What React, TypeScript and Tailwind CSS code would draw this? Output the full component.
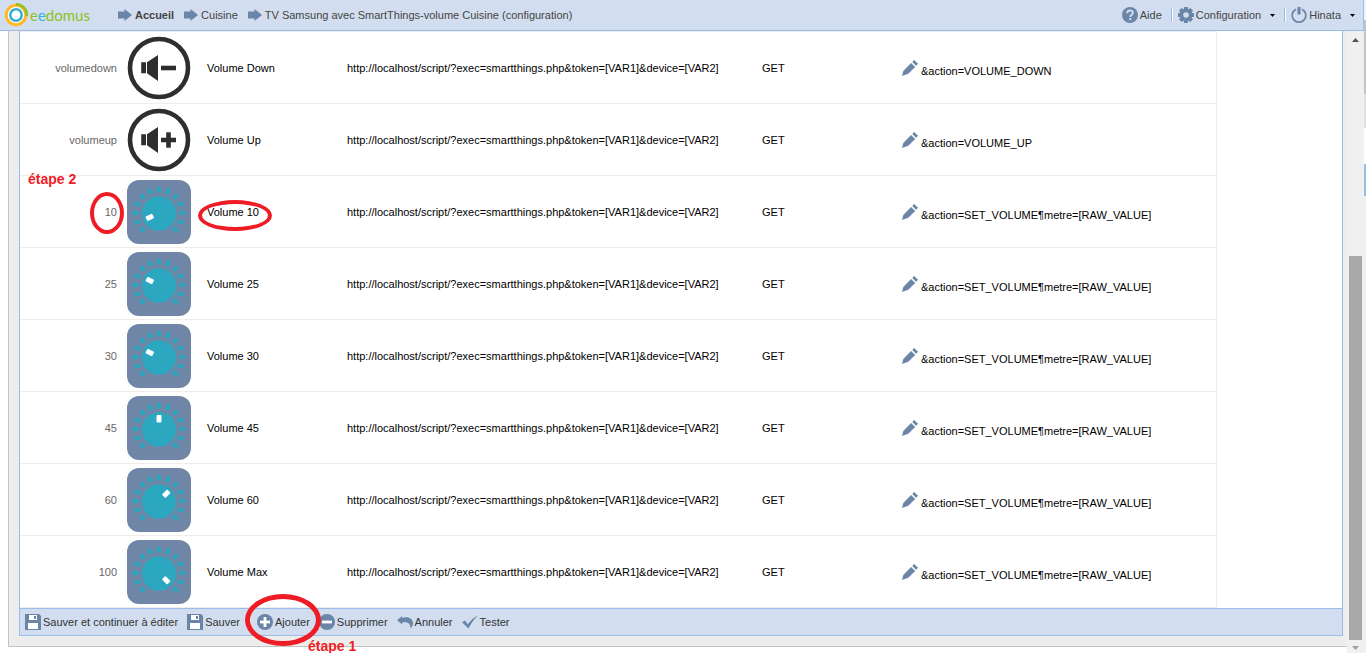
import React from 'react';

const SCRIPT_URL = 'http://localhost/script/?exec=smartthings.php&token=[VAR1]&device=[VAR2]';

type Row = {
  value: string;
  name: string;
  param: string;
  icon: 'down' | 'up' | 'knob';
  angle?: number;
  marked?: boolean;
};

const SET_VOLUME = '&action=SET_VOLUME¶metre=[RAW_VALUE]';

const rows: Row[] = [
  { value: 'volumedown', name: 'Volume Down', param: '&action=VOLUME_DOWN', icon: 'down' },
  { value: 'volumeup', name: 'Volume Up', param: '&action=VOLUME_UP', icon: 'up' },
  { value: '10', name: 'Volume 10', param: SET_VOLUME, icon: 'knob', angle: -115, marked: true },
  { value: '25', name: 'Volume 25', param: SET_VOLUME, icon: 'knob', angle: -64 },
  { value: '30', name: 'Volume 30', param: SET_VOLUME, icon: 'knob', angle: -64 },
  { value: '45', name: 'Volume 45', param: SET_VOLUME, icon: 'knob', angle: 0 },
  { value: '60', name: 'Volume 60', param: SET_VOLUME, icon: 'knob', angle: 45 },
  { value: '100', name: 'Volume Max', param: SET_VOLUME, icon: 'knob', angle: 135 },
];

const ticks = Array.from({ length: 13 }, (_, i) => -135 + i * 22.5);

const KnobIcon = ({ angle }: { angle: number }) => (
  <svg className="block size-16" viewBox="0 0 64 64" aria-hidden="true">
    <rect width="64" height="64" rx="12" fill="#6f86a6" />
    {ticks.map((t) => (
      <rect key={t} x="30" y="6.800" width="4" height="5.800" fill="#2ba8c0" transform={`rotate(${t} 32 33)`} />
    ))}
    <circle cx="32" cy="33.500" r="17.200" fill="#2ba8c0" />
    <rect x="29.500" y="19" width="5" height="7.500" rx="1" fill="#fff" transform={`rotate(${angle} 32 33)`} />
  </svg>
);

const SpeakerIcon = ({ plus }: { plus: boolean }) => (
  <svg className="block size-16" viewBox="0 0 64 64" aria-hidden="true">
    <circle cx="32" cy="32" r="29" fill="#fff" stroke="#2e2e2d" strokeWidth="4.600" />
    <path d="M14.200 26.300h4.800v11h-4.800zM20 26.300L31 19v26l-11-7.700z" fill="#2e2e2d" />
    <path d="M34 29.700h15v4.600H34z" fill="#2e2e2d" />
    {plus && <path d="M39.200 24.300h4.600v15.400h-4.600z" fill="#2e2e2d" />}
  </svg>
);

const ArrowIcon = () => (
  <svg className="h-3 w-[14px]" viewBox="0 0 14 12" fill="#6b85a8" aria-hidden="true">
    <path d="M0 2.500h6.500V0L14 6l-7.500 6V9.500H0z" />
  </svg>
);

const HelpIcon = () => (
  <svg className="size-4" viewBox="0 0 16 16" aria-hidden="true">
    <circle cx="8" cy="8" r="8" fill="#6b85a8" />
    <path d="M5.200 6.200c0-3.600 5.700-3.500 5.700-.3 0 1.900-2.600 2-2.600 4" fill="none" stroke="#d2deef" strokeWidth="1.900" />
    <path d="M7.200 11.200h2.100v2H7.200z" fill="#d2deef" />
  </svg>
);

const GearIcon = () => (
  <svg className="size-4" viewBox="0 0 16 16" aria-hidden="true">
    {[0, 45, 90, 135].map((a) => (
      <rect key={a} x="6" y="0" width="4" height="16" rx="0.600" fill="#6b85a8" transform={`rotate(${a} 8 8)`} />
    ))}
    <circle cx="8" cy="8" r="6.400" fill="#6b85a8" />
    <circle cx="8" cy="8" r="2.800" fill="#d2deef" />
  </svg>
);

const PowerIcon = () => (
  <svg className="size-4" viewBox="0 0 16 16" fill="none" stroke="#6b85a8" aria-hidden="true">
    <path d="M5 2.300A6.800 6.800 0 1 0 11 2.300" strokeWidth="1.700" />
    <path d="M8 0v7.500" strokeWidth="3" />
  </svg>
);

const CaretIcon = () => (
  <svg className="h-[3px] w-[5px]" viewBox="0 0 5 3" aria-hidden="true">
    <path d="M0 0h5L2.500 3z" fill="#000" />
  </svg>
);

const SaveIcon = () => (
  <svg className="size-4" viewBox="0 0 16 16" aria-hidden="true">
    <path d="M0 0h14l2 2v14H0z" fill="#6b85a8" />
    <path d="M4 1h8v5H4zM3 9h10v6H3z" fill="#fff" />
    <path d="M9 2h2v3H9z" fill="#6b85a8" />
  </svg>
);

const RoundIcon = ({ plus }: { plus: boolean }) => (
  <svg className="size-4" viewBox="0 0 16 16" aria-hidden="true">
    <circle cx="8" cy="8" r="8" fill="#6b85a8" />
    <path d="M3 6.600h10v2.800H3z" fill="#fff" />
    {plus && <path d="M6.600 3h2.800v10H6.600z" fill="#fff" />}
  </svg>
);

const UndoIcon = () => (
  <svg className="size-4" viewBox="0 0 16 16" fill="#6b85a8" aria-hidden="true">
    <path d="M0 6.300L5.200 2v2C11 1.800 16 4.500 16 9.200c0 2-.9 3.600-2.700 5C13.800 9.500 10.500 7.200 5.200 8.600v2z" />
  </svg>
);

const CheckIcon = () => (
  <svg className="size-4" viewBox="0 0 16 16" fill="#6b85a8" aria-hidden="true">
    <path d="M0 8.200l3-1.700 2.800 3.800C8.500 6.500 11.500 3.700 16 1.500 11.800 5.500 9 9.500 6.400 14.500z" />
  </svg>
);

const PencilIcon = () => (
  <svg className="size-4" viewBox="0 0 16 16" fill="#6b85a8" aria-hidden="true">
    <path d="M0 16l1.300-5L9 3l4.200 4-7 6.700zM10.200 2l2-2L16 3.700l-2.100 2.100z" />
  </svg>
);

const Logo = () => (
  <a href="#accueil" className="flex items-center gap-[2px]">
    <svg className="size-6" viewBox="0 0 24 24" fill="none" aria-hidden="true">
      <circle cx="12" cy="12" r="11" fill="#fff" />
      <circle cx="12" cy="12" r="9.800" stroke="#fbb92b" strokeWidth="3" />
      <path d="M12 1.200A10.800 10.800 0 0 1 22.800 13" stroke="#93bf22" strokeWidth="2.600" />
      <circle cx="12" cy="12" r="5.700" stroke="#33aed0" strokeWidth="2.500" />
    </svg>
    <span className="font-['Lato',sans-serif] text-[15px] leading-5 text-[#8fbe21]">
      e<span className="text-[#35b4d8]">e</span>domus
    </span>
  </a>
);

const Circled = ({ className }: { className: string }) => (
  <span className={`pointer-events-none absolute rounded-[50%] border-[#ee1c25] ${className}`} />
);

const Separator = () => <span className="h-[14px] w-[2px] border-l border-[#99bbe8] bg-white" />;

const Header = () => (
  <header className="flex h-[31px] items-center justify-between border-r border-b border-[#99bce8] bg-[#d2deef] pr-2 pl-1 text-[#444]">
    <nav className="flex items-center gap-[10px]" aria-label="Navigation">
      <div className="mr-[18px]">
        <Logo />
      </div>
      <a href="#accueil" className="flex items-center gap-[3px] font-bold">
        <ArrowIcon />
        Accueil
      </a>
      <a href="#cuisine" className="flex items-center gap-[3px]">
        <ArrowIcon />
        Cuisine
      </a>
      <a href="#configuration" className="flex items-center gap-[3px]">
        <ArrowIcon />
        TV Samsung avec SmartThings-volume Cuisine (configuration)
      </a>
    </nav>
    <div className="flex items-center">
      <button type="button" className="mr-[9px] flex items-center gap-[2px]">
        <HelpIcon />
        Aide
      </button>
      <Separator />
      <button type="button" className="mr-[9px] ml-[5px] flex items-center gap-[2px]">
        <GearIcon />
        <span className="mr-[7px]">Configuration</span>
        <CaretIcon />
      </button>
      <Separator />
      <button type="button" className="ml-[5px] flex items-center gap-[2px]">
        <PowerIcon />
        <span className="mr-[7px]">Hinata</span>
        <CaretIcon />
      </button>
    </div>
  </header>
);

const ActionsTable = () => (
  <table className="w-[calc(100%-125px)] table-fixed border-separate border-spacing-0 border-t border-r border-[#ededed] text-black">
    <colgroup>
      <col className="w-[97px]" />
      <col className="w-[90px]" />
      <col className="w-[140px]" />
      <col className="w-[415px]" />
      <col className="w-[140px]" />
      <col />
    </colgroup>
    <tbody>
      {rows.map((row) => (
        <tr key={row.value} className="*:h-[72px] *:border-b *:border-[#ededed] *:p-0">
          <td className="relative text-right text-[#666]">
            {row.marked && (
              <span className="absolute -top-[5px] left-2 text-[14px] leading-4 font-bold text-[#ee1c25]">étape 2</span>
            )}
            <span className="relative">
              {row.value}
              {row.marked && <Circled className="-top-[14px] -right-[7px] h-[42px] w-[34px] border-4" />}
            </span>
          </td>
          <td>
            <div className="pl-[10px]">
              {row.icon === 'knob' ? <KnobIcon angle={row.angle ?? 0} /> : <SpeakerIcon plus={row.icon === 'up'} />}
            </div>
          </td>
          <td>
            <span className="relative">
              {row.name}
              {row.marked && <Circled className="-top-[6px] -left-[9px] h-[31px] w-[74px] border-4" />}
            </span>
          </td>
          <td>{SCRIPT_URL}</td>
          <td>GET</td>
          <td>
            <div className="flex items-end gap-[3px] whitespace-nowrap">
              <button type="button" aria-label={`Modifier ${row.name}`}>
                <PencilIcon />
              </button>
              <span className="-mb-[2px]">{row.param}</span>
            </div>
          </td>
        </tr>
      ))}
    </tbody>
  </table>
);

const Toolbar = () => (
  <div className="flex h-[28px] items-center gap-[9px] border-y border-[#99bce8] bg-[#d2deef] pl-[5px] text-[#333]">
    <button type="button" className="flex items-center gap-[2px]">
      <SaveIcon />
      Sauver et continuer à éditer
    </button>
    <button type="button" className="flex items-center gap-[2px]">
      <SaveIcon />
      Sauver
    </button>
    <div className="relative flex items-center gap-[6px]">
      <Separator />
      <button type="button" className="flex items-center gap-[2px]">
        <RoundIcon plus />
        Ajouter
      </button>
      <Circled className="-top-[20px] -left-[4px] z-10 h-[52px] w-[76px] border-[5px]" />
      <span className="absolute top-[24px] left-[59px] z-10 text-[14px] leading-4 font-bold whitespace-nowrap text-[#ee1c25]">
        étape 1
      </span>
    </div>
    <button type="button" className="flex items-center gap-[2px]">
      <RoundIcon plus={false} />
      Supprimer
    </button>
    <button type="button" className="flex items-center gap-[2px]">
      <UndoIcon />
      Annuler
    </button>
    <button type="button" className="flex items-center gap-[2px]">
      <CheckIcon />
      Tester
    </button>
  </div>
);

const ScrollBar = () => (
  <div className="flex w-[17px] shrink-0 flex-col items-center bg-[#f0f0f0]" aria-hidden="true">
    <svg className="mt-[7px] h-1 w-[7px]" viewBox="0 0 7 4">
      <path d="M0 4h7L3.500 0z" fill="#505050" />
    </svg>
    <div className="grow-[214]" />
    <div className="w-[13px] grow-[384] bg-[#a8a8a8]" />
    <svg className="mt-[6px] mb-[3px] h-1 w-[7px]" viewBox="0 0 7 4">
      <path d="M0 0h7L3.500 4z" fill="#a0a0a0" />
    </svg>
  </div>
);

const App = () => (
  <div className="flex min-h-screen bg-white font-['Liberation_Sans',Arial,sans-serif] text-[11px] leading-[14px]">
    <div className="flex min-w-0 flex-1 flex-col">
      <Header />
      <div className="flex grow">
        <main className="min-w-0 flex-1 pb-[6px] pl-2">
          <div className="border-b border-l border-[#c4c4c4] bg-[#ededed] pr-1 pb-[10px] pl-[10px]">
            <section className="border-x border-[#99bce8] bg-white">
              <ActionsTable />
              <Toolbar />
            </section>
          </div>
        </main>
        <ScrollBar />
      </div>
    </div>
    {/* edge of the outer window */}
    <div className="flex w-[2px] shrink-0 flex-col">
      <div className="h-[20px] bg-[#eef3fa]" />
      <div className="h-[74px] bg-[#c4c4c4]" />
      <div className="h-[34px] bg-[#dde2e8]" />
      <div className="h-[36px] bg-white" />
      <div className="h-[32px] bg-[#99bce8]" />
      <div className="grow bg-[#f0f0f0]" />
    </div>
  </div>
);

export default App;
